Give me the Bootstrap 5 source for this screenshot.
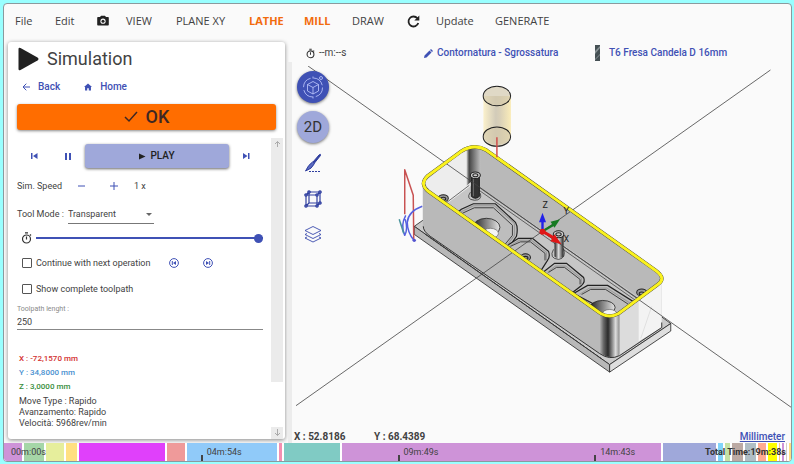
<!DOCTYPE html>
<html lang="en">
<head>
<meta charset="utf-8">
<meta name="viewport" content="width=device-width, initial-scale=1">
<title>Simulation</title>
<link rel="stylesheet" href="https://cdn.jsdelivr.net/npm/bootstrap@5.3.0/dist/css/bootstrap.min.css">
<style>
:root{--ink:#424242;--indigo:#3f51b5;--soft:#9fa8da}
body{font:10px/14px Roboto,"Noto Sans",sans-serif;color:var(--ink);background:#9ff;padding:3px 2px 3px 3px}
.app{min-height:calc(100vh - 6px);background:#fafafa;border:1px solid #8a9a9e;border-radius:4px;overflow:hidden}
svg{display:block;flex:none}
button,.plain{border:0;background:none;padding:0;color:inherit;font:inherit}
.menu{display:grid;grid-template-columns:40px 42px 29px 50px 73px 55px 48px 55px 29px 59px auto;padding-left:11px;height:34px;font:11px/16px "Open Sans","Noto Sans",sans-serif}
.menu a{color:var(--ink);text-decoration:none;white-space:nowrap}
.menu .hot{color:#f26c0d;font-weight:700}
.side{width:277px;margin:4px 0 4px 4px;background:#fff;border-radius:3px;box-shadow:0 1px 4px #0007}
.title{font-size:18px;line-height:24px;font-weight:400}
.crumbs{margin:6px 0 8px;padding-left:14px;gap:24px}
.blue{color:var(--indigo);font-weight:500;text-decoration:none}
.ok{height:26px;background:#ff6d00;color:#3e2723;border-radius:3px;box-shadow:0 1px 3px #0007;font-size:18px;font-weight:500;margin:0 9px}
.play{width:144px;height:24px;background:var(--soft);color:#212121;border-radius:3px;box-shadow:0 1px 3px #0009;font-weight:500}
.form-side{font-size:9px;padding:0 8px 0 9px}
.controls{height:24px;display:grid;grid-template-columns:34px 34px 144px 34px;margin-top:6px;font-size:10px}
.opt{height:22px}
.speed{height:36px}
.mode{height:20px}
.mode select{width:86px;height:19px;border:0;border-bottom:1px solid #777;background:none;appearance:none;padding:0;color:var(--ink);font:inherit}
.arrow{margin-left:-8px;pointer-events:none}
.slide{height:28px}
.slide input{appearance:none;height:10px;background:linear-gradient(var(--indigo),var(--indigo)) center/100% 2px no-repeat;margin:0}
.slide input::-webkit-slider-thumb{appearance:none;width:9px;height:9px;border-radius:50%;background:var(--indigo)}
.tick{appearance:none;width:10px;height:10px;border:1px solid #555;border-radius:1px;margin:0 4px 0 5px;background:#fff}
.tick:checked{background:var(--indigo)}
.opt label{width:133px;white-space:nowrap}
.field label{font-size:7px;line-height:10px;color:#8a8a8a;margin-top:4px}
.field input{border:0;border-bottom:1px solid #888;height:16px;padding:0;background:none;color:var(--ink);width:100%;font:inherit}
.read{font-size:8px;font-weight:500;padding-left:2px;margin-top:22px}
.more{font-size:9px;line-height:11px;font-weight:400;margin-top:2px}
.bar{width:12px;margin-right:2px}
.thumb{background:#ebebeb;height:244px;padding-top:2px}
.down{background:#ebebeb;height:12px;padding:1px 0}
.split{width:4px;background:#ececec;margin:24px 0 0 3px}
.head{height:28px;padding:2px 0 0 14px}
.h-time{width:118px}.h-op{width:170px}
.tools{position:absolute;left:5px;top:5px}
.round{width:32px;height:32px;border-radius:50%;box-shadow:0 1px 3px #0008}
.r1{background:var(--indigo)}
.r2{background:var(--soft);font-size:15px;color:#333;margin-top:8px;margin-bottom:10px}
.coords{height:12px;line-height:12px;font-weight:700;padding:0 6px 0 2px}
.x{width:80px}
.time{height:18px;gap:2px;background:#fff}
.time div{min-width:0;flex-basis:0}
.labels{position:absolute;inset:0;font-size:9px}
.labels span{width:25%;line-height:18px;display:flex;align-items:flex-end;gap:4px}
.labels span+span::before{content:"";width:2px;height:6px;background:#444}
.labels span:first-child{padding-left:7px}
.total{position:absolute;right:5px;top:0;line-height:18px;font-size:9px;font-weight:700;color:#333}
</style>
<script src="https://cdn.jsdelivr.net/npm/bootstrap@5.3.0/dist/js/bootstrap.bundle.min.js"></script>
</head>
<body>
<div class="app d-flex flex-column">
<nav class="menu align-items-center" aria-label="Main">
<a href="#">File</a><a href="#">Edit</a>
<a href="#" aria-label="Camera"><svg width="12" height="12" viewBox="0 0 12 12"><path fill="#222" d="M1 2h2l1-1.300h4L9 2h2q.8 0 .8.8v7q0 .8-.8.8H1q-.8 0-.8-.8v-7Q.200 2 1 2z"/><circle cx="6" cy="6.200" r="2.600" fill="#fafafa"/><circle cx="6" cy="6.200" r="1.500" fill="#222"/></svg></a>
<a href="#">VIEW</a><a href="#">PLANE XY</a><a href="#" class="hot">LATHE</a><a href="#" class="hot">MILL</a><a href="#">DRAW</a>
<a href="#" aria-label="Refresh"><svg width="13" height="13" viewBox="0 0 13 13" fill="none"><path d="M10.400 3.300A5 5 0 1 0 11.300 8" stroke="#222" stroke-width="1.800"/><path d="M12.300.6v5H7.300z" fill="#222"/></svg></a>
<a href="#">Update</a><a href="#">GENERATE</a>
</nav>
<div class="d-flex flex-grow-1">
<section class="side d-flex flex-column">
<div class="d-flex align-items-center pt-1 ps-2 gap-2">
<svg width="23" height="26" viewBox="0 0 23 26"><path d="M2.500 3v20q0 2 2 1l17-9.500q2-1.500 0-3L4.500 2q-2-1-2 1z" fill="#212121"/></svg>
<h1 class="title m-0">Simulation</h1></div>
<div class="crumbs d-flex align-items-center">
<a href="#" class="blue d-flex align-items-center gap-2 lh-1 py-1"><svg width="8" height="8" viewBox="0 0 8 8" fill="none" stroke="#3f51b5"><path d="M8 4H1M4.300.7L1 4l3.300 3.300"/></svg>Back</a>
<a href="#" class="blue d-flex align-items-center gap-2 lh-1 py-1"><svg width="8" height="8" viewBox="0 0 10 9"><path d="M5 0L0 4.500h1.300V9H4V6h2v3h2.700V4.500H10z" fill="#3f51b5"/></svg>Home</a></div>
<button class="ok d-flex align-items-center justify-content-center gap-2"><svg width="14" height="12" viewBox="0 0 14 12" fill="none" stroke="#3e2723" stroke-width="1.500"><path d="M1 6l4 4 8-9"/></svg>OK</button>
<div class="d-flex flex-grow-1 pt-2">
<div class="form-side flex-grow-1">
<div class="controls">
<button class="plain d-flex align-items-center justify-content-center" aria-label="First"><svg width="7" height="6" viewBox="0 0 7 6"><path d="M0 0h1.500v6H0zM6.500 0v6L2 3z" fill="#3f51b5"/></svg></button>
<button class="plain d-flex align-items-center justify-content-center" aria-label="Pause"><svg width="6" height="7" viewBox="0 0 6 7"><path d="M0 0h2v7H0zM4 0h2v7H4z" fill="#3f51b5"/></svg></button>
<button class="play d-flex align-items-center justify-content-center"><svg class="me-1" width="7" height="7" viewBox="0 0 7 7"><path d="M0 .5v6L6.500 3.500z" fill="#212121"/></svg>PLAY</button>
<button class="plain d-flex align-items-center justify-content-center" aria-label="Last"><svg width="7" height="6" viewBox="0 0 7 6"><path d="M5 0h1.500v6H5zM0 0v6L4.500 3z" fill="#3f51b5"/></svg></button></div>
<div class="speed d-flex align-items-center">
<span class="me-3">Sim. Speed</span>
<button aria-label="Slower"><svg width="8" height="8" viewBox="0 0 8 8"><path d="M0 4h7" stroke="#3f51b5"/></svg></button>
<button class="ms-4 me-3" aria-label="Faster"><svg width="8" height="8" viewBox="0 0 8 8"><path d="M0 4h8M4 0v8" stroke="#3f51b5"/></svg></button><span>1 x</span></div>
<div class="mode d-flex align-items-center"><label for="tm" class="me-1">Tool Mode :</label><select id="tm"><option>Transparent</option><option>Solid</option></select><svg class="arrow" width="6" height="3" viewBox="0 0 6 3"><path d="M0 0h6L3 3z" fill="#666"/></svg></div>
<div class="slide d-flex align-items-center ps-1 gap-1"><svg width="11" height="12" viewBox="0 0 11 12" fill="none" stroke="#333" stroke-width="1.200"><circle cx="5.500" cy="7" r="4"/><path d="M4 .8h3M5.500 4.500v3M9 2.500l1 1"/></svg><input class="flex-grow-1" type="range" min="0" max="100" value="100" aria-label="Simulation time"></div>
<div class="opt d-flex align-items-center"><input class="tick" type="checkbox" id="c1"><label for="c1">Continue with next operation</label>
<button class="me-4" aria-label="Previous operation"><svg width="10" height="10" viewBox="0 0 10 10"><circle cx="5" cy="5" r="4.400" fill="none" stroke="#3f51b5"/><path d="M2.800 3h1v4h-1zM7 3v4L4 5z" fill="#3f51b5"/></svg></button>
<button aria-label="Next operation"><svg width="10" height="10" viewBox="0 0 10 10"><circle cx="5" cy="5" r="4.400" fill="none" stroke="#3f51b5"/><path d="M6.200 3h1v4h-1zM3 3v4l3-2z" fill="#3f51b5"/></svg></button></div>
<div class="opt d-flex align-items-center mt-1"><input class="tick" type="checkbox" id="c2"><label for="c2">Show complete toolpath</label></div>
<div class="field d-flex flex-column"><label for="len">Toolpath lenght :</label><input id="len" type="text" value="250"></div>
<div class="read"><div style="color:#d32f2f">X : -72,1570 mm</div><div style="color:#4a90d0">Y : 34,8000 mm</div><div style="color:#388e3c">Z : 3,0000 mm</div>
<div class="more">Move Type : Rapido<br>Avanzamento: Rapido<br>Velocità: 5968rev/min</div></div>
</div>
<div class="bar d-flex flex-column justify-content-between">
<div class="thumb"><svg class="mx-auto" width="7" height="8" viewBox="0 0 7 8" fill="none" stroke="#aaa"><path d="M3.500 7V1.500M1 4l2.500-2.500L6 4"/></svg></div>
<div class="down"><svg class="mx-auto" width="7" height="9" viewBox="0 0 7 9" fill="none" stroke="#aaa"><path d="M3.500 1v6.500M1 5l2.500 2.500L6 5"/></svg></div></div>
</div>
</section>
<div class="split"></div>
<main class="flex-grow-1 d-flex flex-column">
<div class="head d-flex align-items-center">
<div class="h-time d-flex align-items-center gap-1"><svg width="9" height="11" viewBox="0 0 11 12" fill="none" stroke="#333" stroke-width="1.300"><circle cx="5.500" cy="7" r="4.200"/><path d="M4 .8h3M5.500 4.500v3M9 2.500l1 1"/></svg>--m:--s</div>
<a href="#" class="h-op blue d-flex align-items-center gap-1"><svg width="9" height="9" viewBox="0 0 9 9"><path d="M0 9l.5-2.500 5-5 2 2-5 5zM6 1l1-1 2 2-1 1z" fill="#3f51b5"/></svg>Contornatura - Sgrossatura</a>
<a href="#" class="blue d-flex align-items-center gap-2"><svg width="7" height="16" viewBox="0 0 7 16"><path d="M1 0h5v16H1z" fill="#455054"/><path d="M1 6L6 1v2L1 9zM1 14l5-5v1l-5 5z" fill="#8a9497"/></svg>T6 Fresa Candela D 16mm</a>
</div>
<div class="position-relative flex-grow-1">
<svg class="w-100" viewBox="293 66 498 364" role="img" aria-label="Part model with tool path">
<defs>
<linearGradient id="gt"><stop stop-color="#fbf1cc"/><stop offset=".45" stop-color="#d2cbb9"/><stop offset=".6" stop-color="#d9d0b8"/><stop offset="1" stop-color="#faecb9"/></linearGradient>
<linearGradient id="gc"><stop stop-color="#b9b9b9"/><stop offset=".2" stop-color="#666"/><stop offset=".42" stop-color="#2a2a2a"/><stop offset=".62" stop-color="#888"/><stop offset=".8" stop-color="#ddd"/><stop offset="1" stop-color="#888"/></linearGradient>
<linearGradient id="gk"><stop stop-color="#ddd"/><stop offset=".2" stop-color="#444"/><stop offset=".65" stop-color="#888"/><stop offset="1" stop-color="#bdbdbd"/></linearGradient>
<linearGradient id="gh"><stop stop-color="#222"/><stop offset=".35" stop-color="#666"/><stop offset="1" stop-color="#e6e6e6"/></linearGradient>
<linearGradient id="gp"><stop stop-color="#222"/><stop offset=".45" stop-color="#ddd"/><stop offset="1" stop-color="#222"/></linearGradient>
<clipPath id="rim"><path id="rp" d="M428 176L462 151Q475 143 487 150L656 270Q667 278 658 284L619 313Q610 318 601 313L429 191Q420 184 428 176z"/></clipPath>
</defs>
<g stroke="#222" stroke-width=".8" stroke-linejoin="round">
<path d="M415 226L425 219 660 315 671 323 610 364z" fill="#cacaca"/>
<path d="M415 226L610 364V371.500L415 234z" fill="#b8b8b8"/>
<path d="M610 364L671 323V330.500L610 371.500z" fill="#dedede"/>
</g>
<path d="M423.500 183V226Q424 231 431 236L600 353Q610 360 620 355L662 327V280L610 250z" fill="#b9b9b9"/>
<path d="M600 308V352Q610 360 620 354V308z" fill="url(#gc)"/>
<path d="M620 310L640 298V341L620 355z" fill="#dcdcdc"/><path d="M639 298L662 279V327L639 341z" fill="#f3f3f3"/><path d="M641 338L652 306" stroke="#ccc" stroke-width=".5"/>
<path d="M424 226Q424 231 431 236L600 353Q610 360 620 355L662 327V322" fill="none" stroke="#222" stroke-width=".9"/>
<path d="M426 234L603 359" stroke="#333" stroke-width=".9" stroke-dasharray="2 1"/>
<g clip-path="url(#rim)">
<path d="M415 140H670V320H415z" fill="#c6c6c6"/>
<path d="M474 140L670 270V318L472 181z" fill="#b9b9b9"/>
<path d="M415 190L475 140V183L440 209 425 200z" fill="#ededed"/>
<path d="M467 145H481V187L471 182 467 186z" fill="url(#gk)"/>
<path d="M445 204L470 185M471 181L641 300M474 186L636 300" fill="none" stroke="#333" stroke-width=".7"/>
<g fill="#bdbdbd" stroke="#222" stroke-width="1.200">
<path d="M450 219L462 209 474 203.500H496L516 222Q519 227 517 236L508 249z"/>
<path d="M505 247L519 238H533L549 251Q551 256 548 260L541 271z"/>
<path d="M542 273L555 263H567L584 277Q586 281 582 285L573 292z"/>
<path d="M574 293L588 285H608L635 302 622 318z"/></g>
<g fill="none" stroke="#999" stroke-width="1"><path d="M461 212L474 205.500H495L515 223V235L506 247M510 246L520 240H532L547 252V260M548 272L556 265.500H566L582 278V284M580 294L590 287.500H607L631 303"/></g>
<g fill="none" stroke="#333" stroke-width=".9"><path d="M463 213L475 207.500H494L513 225V235L504 246M511 246L521 241.500H531L545.500 253V260M549 272L557 267H565L580.500 279V284M582 294L591 289H606L629 304"/></g>
<ellipse cx="487" cy="227" rx="13.500" ry="9" fill="url(#gh)" stroke="#222" stroke-width=".8"/><ellipse cx="491" cy="233" rx="8" ry="5" fill="#f4f4f4" stroke="#555" stroke-width=".6"/>
<ellipse cx="603" cy="307" rx="12.500" ry="7" fill="url(#gh)" stroke="#222" stroke-width=".8"/><ellipse cx="610" cy="313" rx="7" ry="4" fill="#f4f4f4" stroke="#555" stroke-width=".6"/>
<g fill="#999" stroke="#222"><ellipse cx="444" cy="198" rx="5" ry="3.500"/><ellipse cx="444" cy="198.500" rx="2.500" ry="1.500"/><ellipse cx="526" cy="257" rx="5" ry="3.500"/><ellipse cx="526" cy="257.500" rx="2.500" ry="1.500"/><ellipse cx="642" cy="292" rx="5" ry="3.500"/><ellipse cx="642" cy="293" rx="2.500" ry="1.500"/></g>
<path d="M471 192Q466 199 475 200Q483 200 481 193" fill="none" stroke="#333" stroke-width=".8"/>
<path d="M472 175V196Q476 200 480 196V175z" fill="#333" stroke="#222"/><path d="M474 178V196" stroke="#999" stroke-width=".6"/>
</g>
<path d="M554 249Q549 258 559 259Q567 258 564 248" fill="none" stroke="#333" stroke-width=".8"/>
<path d="M555 234V256Q559 260 564 256V234z" fill="url(#gp)"/>
<g fill="#ccc" stroke="#222"><ellipse cx="476" cy="175" rx="5" ry="3.300"/><ellipse cx="476" cy="175" rx="2.500" ry="1.500"/><ellipse cx="559" cy="234" rx="5.300" ry="3.500"/><ellipse cx="559" cy="234" rx="2.700" ry="1.600"/></g>
<path d="M309 66L791 406.500M770.500 70L297 405" stroke="#444" stroke-width=".8" fill="none"/>
<use href="#rp" fill="none" stroke="#333" stroke-width="3.600"/>
<use href="#rp" fill="none" stroke="#faf21e" stroke-width="3"/>
<path d="M484 96V136.500A14 10 0 0 0 511.500 136.500V96z" fill="url(#gt)"/>
<g fill="#d3c7aa" fill-opacity=".65" stroke="#222"><ellipse cx="497.500" cy="96" rx="13.700" ry="9.700"/><ellipse cx="497.500" cy="136.500" rx="13.700" ry="9.700"/></g>
<path d="M497.500 137V157" stroke="#d04545" stroke-width="1.400"/>
<g fill="none" stroke-width="1.500" stroke-linejoin="round"><path d="M405.500 214V169.500L414 195 414.500 240" stroke="#c85252"/><path d="M423 206Q409 211 408 222Q408 232 415 240.500" stroke="#5560df"/><path d="M406.500 215Q401 225 405.500 235Q409 229 406 219" stroke="#5560df"/><path d="M400 219L404.500 233" stroke="#47929b"/></g><circle cx="415" cy="240" r="1.700" fill="#5353cf"/>
<path d="M543 231V219" stroke="#2222e8" stroke-width="2.400"/><path d="M539.500 222L543 212.500 546.500 222z" fill="#2222e8"/>
<path d="M543 231L555 224" stroke="#157a22" stroke-width="2.400"/><path d="M551 221.500L560.500 219 555 227.500z" fill="#157a22"/>
<path d="M543 231L555 238" stroke="#e01717" stroke-width="3"/><path d="M555 234L562 244 551 241z" fill="#e01717"/><circle cx="543" cy="231.500" r="3" fill="#e01717"/>
<g font-family="Roboto, sans-serif" font-size="9" fill="#222"><text x="543" y="208">Z</text><text x="564" y="214">Y</text><text x="564" y="242">X</text></g>
</svg>
<div class="tools d-flex flex-column align-items-center">
<button class="round r1 d-flex align-items-center justify-content-center" aria-label="3D view"><svg width="26" height="26" viewBox="0 0 26 26" fill="none" stroke="#c3cbff" stroke-width=".8"><circle cx="13" cy="13.500" r="9.500" stroke-dasharray="12 3"/><path d="M13 7.500l5.500 3v6.500l-5.500 3-5.500-3v-6.500zM7.500 10.500l5.500 3 5.500-3M13 13.500V20M13 2.500v2M13 22.500v2"/><circle cx="21" cy="4" r="1.500"/></svg></button>
<button class="round r2" aria-label="2D view">2D</button>
<button class="mb-3" aria-label="Trim"><svg width="18" height="20" viewBox="0 0 18 20" fill="none" stroke="#303f9f"><path d="M9 9l6-7q2-1.500 1.500.5L10.500 10z" fill="#303f9f"/><path d="M8.500 9l2 1.500Q8 16 1.500 18q3-6.500 7-9z" fill="#5c6bc0"/><path d="M5 18.500h12" stroke-dasharray="2 1"/></svg></button>
<button class="mb-3" aria-label="Bounding box"><svg width="18" height="20" viewBox="0 0 18 20" fill="none" stroke="#303f9f" stroke-width="1.200"><path d="M2 6h11v11H2zM5 3h11v11H5zM2 6l3-3M13 6l3-3M2 17l3-3M13 17l3-3"/><g fill="#7986cb"><circle cx="2" cy="6" r="1.200"/><circle cx="13" cy="6" r="1.200"/><circle cx="2" cy="17" r="1.200"/><circle cx="13" cy="17" r="1.200"/><circle cx="5" cy="3" r="1.200"/><circle cx="16" cy="3" r="1.200"/><circle cx="16" cy="14" r="1.200"/></g></svg></button>
<button aria-label="Layers"><svg width="18" height="18" viewBox="0 0 18 18" fill="none" stroke="#3949ab" stroke-width=".9"><path d="M9 1.500l8 4-8 4-8-4zM3 8.500l-2 1 8 4 8-4-2-1M3 12l-2 1 8 4 8-4-2-1"/></svg></button>
</div>
</div>
<div class="coords d-flex"><span class="x">X : 52.8186</span><span>Y : 68.4389</span><a href="#" class="ms-auto text-decoration-underline blue">Millimeter</a></div>
</main>
</div>
<div class="position-relative">
<div class="time d-flex" id="timeline">
<div style="flex-grow:18;background:#ce93d8"></div><div style="flex-grow:20;background:#a5d6a7"></div><div style="flex-grow:18;background:#e6ee9c"></div><div style="flex-grow:11;background:#ffe082"></div><div style="flex-grow:87;background:#e040fb"></div><div style="flex-grow:18;background:#ef9a9a"></div><div style="flex-grow:90;background:#90caf9"></div><div style="flex-grow:3;background:#f48fb1"></div><div style="flex-grow:56;background:#80cbc4"></div><div style="flex-grow:321;background:#ce93d8"></div><div style="flex-grow:53;background:#9fa8da"></div><div style="flex-grow:5;background:#81d4fa"></div><div style="flex-grow:5;background:#c5e1a5"></div><div style="flex-grow:11;background:#bcaaa4"></div><div style="flex-grow:11;background:#b0bec5"></div><div style="flex-grow:8;background:#ffab91"></div><div style="flex-grow:9;background:#ffff00"></div><div style="flex-grow:1;background:#ffcc80"></div><div style="flex-grow:2;background:#ce93d8"></div><div style="flex-grow:1;background:#d7ccc8"></div><div style="flex-grow:2;background:#ffe082"></div></div>
<div class="labels d-flex"><span>00m:00s</span><span>04m:54s</span><span>09m:49s</span><span>14m:43s</span></div>
<div class="total">Total Time:19m:38s</div>
</div>
</div>
</body>
</html>
